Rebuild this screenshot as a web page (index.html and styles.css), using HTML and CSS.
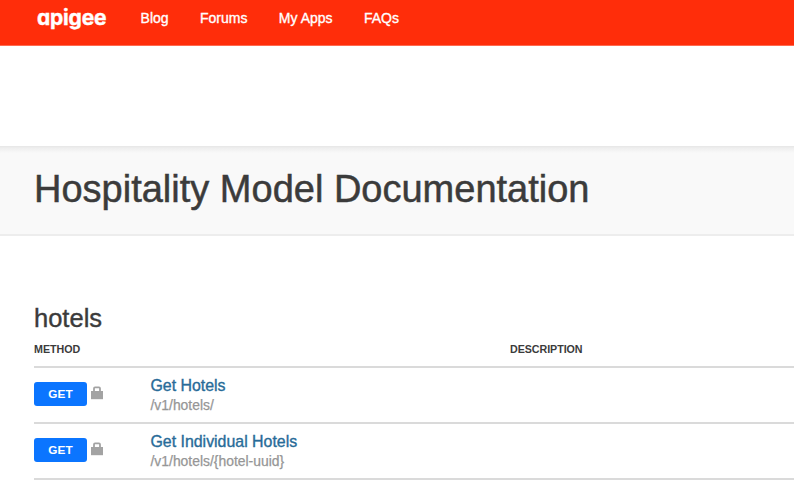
FILE: index.html
```html
<!DOCTYPE html>
<html lang="en">
<head>
<meta charset="utf-8">
<title>Hospitality Model Documentation</title>
<link rel="stylesheet" href="styles.css">
</head>
<body>
<header class="topbar">
  <div class="logo">apigee</div>
  <nav class="nav"><a>Blog</a><a>Forums</a><a>My Apps</a><a>FAQs</a></nav>
</header>
<section class="title-band"><h1>Hospitality Model Documentation</h1></section>
<main class="content">
  <h2>hotels</h2>
  <div class="row head"><span>METHOD</span><span class="desc">DESCRIPTION</span></div>
  <div class="row">
    <div class="method"><span class="badge">GET</span>
      <svg class="lock" width="12" height="14" viewBox="0 0 12 14"><path d="M0 5h12v8.2H0z" fill="#a3a3a3"/><path d="M3 6V2.4q0-1 1-1h4q1 0 1 1V6" fill="none" stroke="#a3a3a3" stroke-width="1.8"/></svg>
    </div>
    <div class="resource"><a>Get Hotels</a><span>/v1/hotels/</span></div>
  </div>
  <div class="row">
    <div class="method"><span class="badge">GET</span>
      <svg class="lock" width="12" height="14" viewBox="0 0 12 14"><path d="M0 5h12v8.2H0z" fill="#a3a3a3"/><path d="M3 6V2.4q0-1 1-1h4q1 0 1 1V6" fill="none" stroke="#a3a3a3" stroke-width="1.8"/></svg>
    </div>
    <div class="resource"><a>Get Individual Hotels</a><span>/v1/hotels/{hotel-uuid}</span></div>
  </div>
</main>
</body>
</html>
```
FILE: styles.css
```css
* { box-sizing: border-box; }
html { background: #fff; }
body {
  margin: 0;
  width: 794px;
  height: 500px;
  overflow: hidden;
  font-family: "Liberation Sans", Arial, sans-serif;
  color: #3b3b3b;
}
.topbar {
  display: flex;
  height: 46px;
  padding-left: 37px;
  background: #ff2d0a;
  border-bottom: 1px solid #ff6a50;
  color: #fff;
}
.logo {
  width: 103.6px;
  padding-top: 6px;
  font: 700 21px/24px Inter, sans-serif;
  font-feature-settings: "cv11";
  letter-spacing: -0.2px;
  -webkit-text-stroke: 0.4px #fff;
}
.nav {
  display: flex;
  gap: 31.4px;
  padding-top: 9px;
  font-size: 14px;
  line-height: 18px;
  -webkit-text-stroke: 0.35px #fff;
}
.title-band {
  height: 90px;
  margin-top: 100px;
  padding: 21px 0 0 34px;
  background: linear-gradient(#e6e6e6 0, #eee 2px, #f9f9f9 7px);
  border-bottom: 2px solid #ededed;
}
h1 {
  margin: 0;
  font-size: 38px;
  line-height: 44px;
  font-weight: 400;
  -webkit-text-stroke: 0.5px #3b3b3b;
}
.content { padding: 67px 0 0 34px; }
h2 {
  margin: 0;
  font-size: 25.5px;
  line-height: 30px;
  font-weight: 400;
  -webkit-text-stroke: 0.4px #3b3b3b;
}
.row {
  display: flex;
  height: 56px;
  border-bottom: 2px solid #dadada;
}
.head {
  height: 35px;
  padding-top: 9px;
  font-size: 10.7px;
  line-height: 14px;
  font-weight: 700;
}
.head span { flex: 0 0 476px; }
.head .desc { flex: 1; letter-spacing: -0.05px; }
.method { display: flex; width: 116.5px; padding-top: 14px; }
.badge {
  width: 53px;
  height: 24px;
  border-radius: 3px;
  background: #0b75ff;
  color: #fff;
  font-size: 11.8px;
  line-height: 25px;
  font-weight: 700;
  text-align: center;
}
.lock { margin: 4px 0 0 4px; }
.resource { display: flex; flex-direction: column; padding-top: 8px; }
.resource a {
  color: #286b98;
  font-size: 15.9px;
  line-height: 20px;
  -webkit-text-stroke: 0.35px #286b98;
}
.resource span {
  color: #969696;
  font-size: 13.9px;
  line-height: 19px;
  -webkit-text-stroke: 0.25px #969696;
}
```
